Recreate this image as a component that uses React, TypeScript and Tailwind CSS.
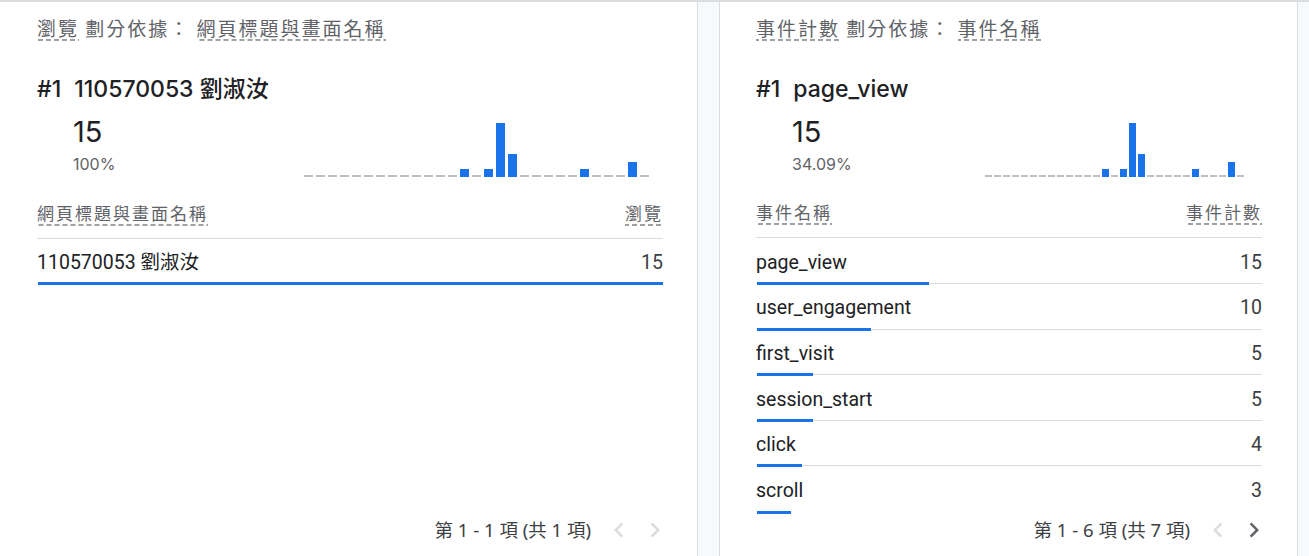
import React from "react";

const hist = [0, 0, 0, 0, 0, 0, 0, 0, 0, 0, 0, 0, 0, 1, 0, 1, 7, 3, 0, 0, 0, 0, 0, 1, 0, 0, 0, 2, 0];

const cjk = "font-['Noto_Sans_CJK_TC','Noto_Sans',sans-serif]";
const dashed =
  "bg-[linear-gradient(to_right,#9aa0a6_5px,transparent_5px)] bg-[length:8px_2px] bg-bottom bg-repeat-x";

const Spark = ({ wide }: { wide: boolean }) => (
  <div className={`flex items-end h-[60px] ${wide ? "gap-[3px] mr-[14px]" : "gap-[2px] mr-[18px]"}`}>
    {hist.map((v, i) => (
      <div key={i} className={wide ? "w-[9px]" : "w-[7px]"}>
        {v > 0 ? (
          <div className="bg-[#1a73e8]" style={{ height: Math.round(v * 7.7) }} />
        ) : (
          <div className="h-[2px] bg-[#bdc1c6]" />
        )}
      </div>
    ))}
  </div>
);

const Chevron = ({ dir, on }: { dir: "l" | "r"; on: boolean }) => (
  <svg width="30" height="30" viewBox="0 0 24 24" className={on ? "fill-[#5f6368]" : "fill-[#dadce0]"}>
    {dir === "l" ? (
      <path d="M15.41 7.41L14 6l-6 6 6 6 1.41-1.41L10.83 12z" />
    ) : (
      <path d="M8.59 16.59L10 18l6-6-6-6-1.41 1.41L13.17 12z" />
    )}
  </svg>
);

type Row = { name: string; value: number };

const Card = ({
  metric,
  dim,
  top,
  pct,
  colName,
  colValue,
  rows,
  total,
  paging,
  nextOn,
  wide,
  className,
}: {
  metric: string;
  dim: string;
  top: string;
  pct: string;
  colName: string;
  colValue: string;
  rows: Row[];
  total: number;
  paging: string;
  nextOn: boolean;
  wide: boolean;
  className: string;
}) => (
  <div className={`bg-white flex flex-col h-full ${className}`}>
    <div className={`mt-[12px] text-[19px] tracking-[2px] text-[#5f6368] ${cjk}`}>
      <span className={`inline-block leading-[26px] ${dashed}`}>{metric}</span>
      <span> 劃分依據： </span>
      <span className={`inline-block leading-[26px] ${dashed}`}>{dim}</span>
    </div>

    <div className="mt-[31px] h-[30px] leading-[30px] text-[23px] font-medium text-[#202124] font-['Inter','Noto_Sans_CJK_TC',sans-serif]">
      <span className="mr-[13px]">#1</span>
      {top}
    </div>

    <div className="flex items-end justify-between">
      <div className="pl-[36px] pb-[3px] font-['Inter',sans-serif]">
        <div className="mt-[11px] text-[29px] leading-[34px] text-[#202124]">15</div>
        <div className="mt-[5px] text-[16px] leading-[20px] text-[#5f6368]">{pct}</div>
      </div>
      <Spark wide={wide} />
    </div>

    <div
      className={`h-[62px] flex items-end justify-between pb-[12px] border-b border-[#dadce0] text-[17px] tracking-[2px] text-[#5f6368] ${cjk}`}
    >
      <span className={`inline-block leading-[26px] ${dashed}`}>{colName}</span>
      <span className={`inline-block leading-[26px] ${dashed}`}>{colValue}</span>
    </div>

    {rows.map((r, i) => (
      <div
        key={r.name}
        className={`relative h-[45.67px] flex items-center justify-between pt-[4px] ${
          i < rows.length - 1 || rows.length === 1 ? "border-b border-[#dadce0]" : ""
        } font-['Roboto','Noto_Sans_CJK_TC',sans-serif] text-[19.5px] leading-[26px]`}
      >
        <span className="text-[#202124]">{r.name}</span>
        <span className="text-[#3c4043]">{r.value}</span>
        <div
          className="absolute left-[1px] bottom-[-2px] h-[3px] bg-[#1a73e8]"
          style={{ width: `calc(${(r.value / total) * 100}% - 1px)` }}
        />
      </div>
    ))}

    <div className="mt-auto mb-[8px] h-[36px] flex items-center justify-end mr-[-7px]">
      <span className="text-[18.5px] text-[#3c4043] font-['Noto_Sans','Noto_Sans_CJK_TC',sans-serif]">{paging}</span>
      <div className="ml-[13px] flex gap-[6px]">
        <Chevron dir="l" on={false} />
        <Chevron dir="r" on={nextOn} />
      </div>
    </div>
  </div>
);

export default function App() {
  const events: Row[] = [
    { name: "page_view", value: 15 },
    { name: "user_engagement", value: 10 },
    { name: "first_visit", value: 5 },
    { name: "session_start", value: 5 },
    { name: "click", value: 4 },
    { name: "scroll", value: 3 },
  ];

  return (
    <div className="w-[1309px] h-[556px] overflow-hidden bg-[#f8f9fa] border-t-2 border-[#dadce0] flex">
      <Card
        className="w-[698px] pl-[37px] pr-[34px] border-r border-[#dadce0]"
        metric="瀏覽"
        dim="網頁標題與畫面名稱"
        top="110570053 劉淑汝"
        pct="100%"
        colName="網頁標題與畫面名稱"
        colValue="瀏覽"
        rows={[{ name: "110570053 劉淑汝", value: 15 }]}
        total={15}
        paging="第 1 - 1 項 (共 1 項)"
        nextOn={false}
        wide={true}
      />
      <div className="w-[21px]" />
      <Card
        className="w-[579px] pl-[36px] pr-[35px] border-l border-r border-[#dadce0]"
        metric="事件計數"
        dim="事件名稱"
        top="page_view"
        pct="34.09%"
        colName="事件名稱"
        colValue="事件計數"
        rows={events}
        total={44}
        paging="第 1 - 6 項 (共 7 項)"
        nextOn={true}
        wide={false}
      />
    </div>
  );
}
